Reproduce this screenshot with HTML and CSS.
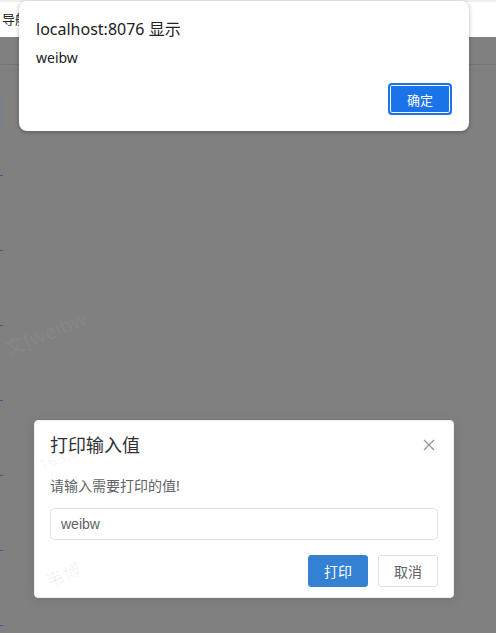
FILE: index.html
```html
<!DOCTYPE html>
<html lang="zh-CN">
<head>
  <meta charset="UTF-8" />
  <meta name="viewport" content="width=device-width, initial-scale=1.0"/>
  <title>打印输入值</title>
  <link rel="stylesheet" href="styles.css">
</head>
<body>

<!-- Top nav -->
<div class="topbar">导航</div>

<!-- Dimmed page -->
<div class="page">
  <div class="tabs"></div>
  <div class="side-btn"></div>
  <div class="rows">
    <div class="row"><span class="mark"></span></div>
    <div class="row"><span class="mark"></span></div>
    <div class="row"><span class="mark"></span></div>
    <div class="row"><span class="mark"></span></div>
    <div class="row"><span class="mark"></span></div>
    <div class="row"><span class="mark"></span></div>
    <div class="row"><span class="mark"></span></div>
  </div>
</div>

<!-- Watermark -->
<div class="wm wm-1">文[weibw</div>

<!-- Element message box -->
<div class="msgbox">
  <div class="msgbox-header">
    <span class="msgbox-title">打印输入值</span>
    <span class="msgbox-close">
      <svg width="12" height="12" viewBox="0 0 12 12"><path d="M1 1L11 11M11 1L1 11" stroke="#909399" stroke-width="1.2" fill="none"/></svg>
    </span>
  </div>
  <div class="msgbox-content">
    <p>请输入需要打印的值!</p>
    <input type="text" class="msgbox-input" value="weibw">
  </div>
  <div class="msgbox-btns">
    <button class="btn btn-primary">打印</button>
    <button class="btn">取消</button>
  </div>
  <div class="wm wm-2">163.com</div>
  <div class="wm wm-3">韦博</div>
</div>

<!-- Browser alert -->
<div class="alert">
  <div class="alert-title">localhost:8076 显示</div>
  <div class="alert-msg">weibw</div>
  <div class="alert-foot">
    <button class="alert-btn">确定</button>
  </div>
</div>

</body>
</html>
```

FILE: styles.css
```css
html {
  overflow: hidden;
}

body {
  margin: 0;
  font-family: "Noto Sans", "Noto Sans CJK SC", sans-serif;
  background: #808080;
  height: 633px;
  overflow: hidden;
}

.topbar {
  height: 35px;
  border-top: 2px solid #efefef;
  background: #fff;
  font-size: 13px;
  line-height: 35px;
  padding-left: 2px;
  color: #222;
}

.page {
  background: #808080;
}

.tabs {
  height: 27px;
  border-bottom: 1px solid #767676;
}

.side-btn {
  width: 3px;
  height: 40px;
  margin-top: 25px;
  background: #7b7f86;
}

.rows {
  padding-top: 45px;
}

.row {
  height: 75px;
}

.row:last-child {
  height: 1px;
}

.mark {
  display: block;
  width: 3px;
  height: 1px;
  background: #2d6399;
}

.wm {
  position: absolute;
  font-size: 20px;
  color: rgba(255, 255, 255, 0.06);
  transform: rotate(-22deg);
  white-space: nowrap;
  pointer-events: none;
}

.wm-1 {
  left: 2px;
  top: 318px;
}

.wm-2 {
  left: 2px;
  top: 22px;
  font-size: 16px;
  color: rgba(0, 0, 0, 0.05);
}

.wm-3 {
  left: 10px;
  top: 140px;
  font-size: 18px;
  color: rgba(0, 0, 0, 0.06);
}

/* message box */
.msgbox {
  position: absolute;
  left: 34px;
  top: 420px;
  width: 418px;
  padding-bottom: 10px;
  background: #fff;
  border: 1px solid #ebeef5;
  border-radius: 4px;
  box-shadow: 0 2px 12px rgba(0,0,0,0.1);
  overflow: hidden;
}

.msgbox-header {
  position: relative;
  padding: 15px 15px 10px;
}

.msgbox-title {
  display: block;
  font-size: 18px;
  line-height: 18px;
  color: #303133;
}

.msgbox-close {
  position: absolute;
  top: 18px;
  right: 18px;
  line-height: 0;
}

.msgbox-content {
  padding: 10px 15px;
  font-size: 14px;
  color: #606266;
}

.msgbox-content p {
  margin: 0;
  line-height: 24px;
}

.msgbox-input {
  display: block;
  box-sizing: border-box;
  width: 100%;
  height: 32px;
  margin-top: 10px;
  padding: 0 10px;
  border: 1px solid #dcdfe6;
  border-radius: 4px;
  font-family: "Liberation Sans", "Noto Sans CJK SC", sans-serif;
  font-size: 14px;
  color: #606266;
  outline: none;
}

.msgbox-btns {
  display: flex;
  justify-content: flex-end;
  gap: 10px;
  padding: 5px 15px 0;
}

.btn {
  width: 60px;
  height: 32px;
  border: 1px solid #dcdfe6;
  border-radius: 3px;
  background: #fff;
  color: #606266;
  font-family: "Noto Sans CJK SC", sans-serif;
  font-size: 14px;
  padding: 0;
}

.btn-primary {
  background: #3480d2;
  border-color: #3480d2;
  color: #fff;
}

/* browser alert */
.alert {
  position: absolute;
  left: 19px;
  top: 1px;
  width: 450px;
  height: 130px;
  box-sizing: border-box;
  padding: 17px 17px 0 17px;
  background: #fff;
  border-radius: 8px;
  box-shadow: 0 1px 4px rgba(0,0,0,0.3);
  color: #202124;
}

.alert-title {
  font-size: 16px;
  line-height: 22px;
}

.alert-msg {
  font-size: 14px;
  line-height: 20px;
  margin-top: 8px;
}

.alert-foot {
  display: flex;
  justify-content: flex-end;
  margin-top: 15px;
}

.alert-btn {
  width: 64px;
  height: 32px;
  border: 2px solid #1a73e8;
  border-radius: 4px;
  background: #1a73e8;
  box-shadow: inset 0 0 0 1px #fff;
  color: #fff;
  font-family: "Noto Sans CJK SC", sans-serif;
  font-size: 13px;
  padding: 0;
}
```
